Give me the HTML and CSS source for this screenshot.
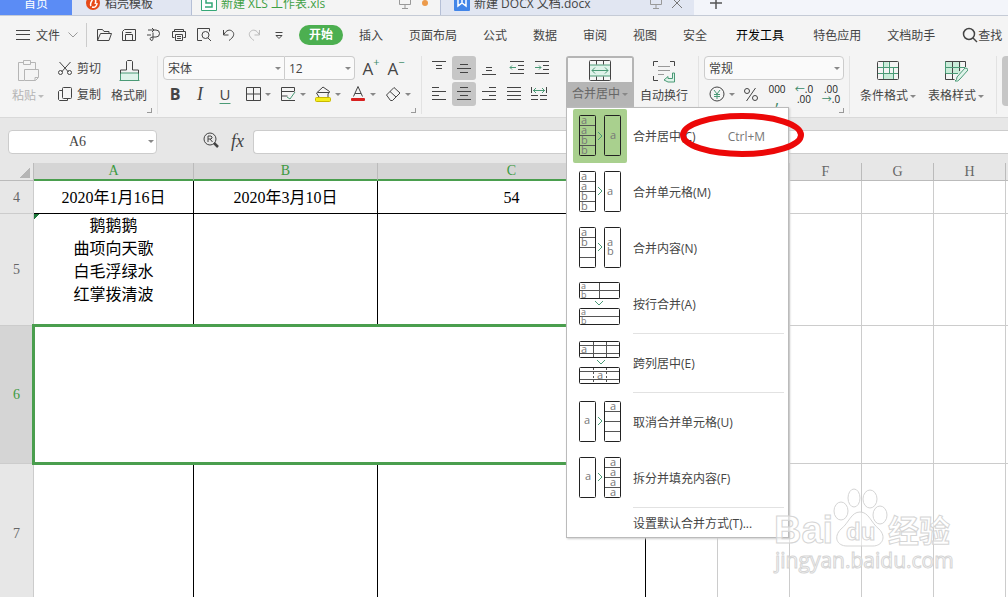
FILE: index.html
```
<!DOCTYPE html>
<html lang="zh-CN">
<head>
  <meta charset="UTF-8" />
  <meta name="viewport" content="width=device-width, initial-scale=1" />
  <title>新建 XLS 工作表.xls</title>
  <link rel="stylesheet" href="styles.css">
</head>
<body>

<div class="app">
  <nav class="tabs">
    <a class="tab home" href="#">首页</a>
    <a class="tab docer" href="#">
      <svg width="14" height="16" viewBox="0 0 14 16"><circle cx="7" cy="8" r="7" fill="#e64a19"/><path d="M5 11C3 8 7 6 7 2c3 2 3 5 2 7M6 12c3 1 5-1 5-4" fill="none" stroke="#fff" stroke-width="1.5"/></svg>
      稻壳模板
    </a>
    <a class="tab active" href="#">
      <svg width="16" height="16" viewBox="0 0 16 16"><path d="M.5.5h15v15H.5z" fill="#fff" stroke="#35a777"/><path d="M11 4H5v4h6v4H4" fill="none" stroke="#35a777" stroke-width="1.5"/></svg>
      <span class="tab-name">新建 XLS 工作表.xls</span>
      <svg width="12" height="14" viewBox="0 0 12 14"><path d="M.5 1.5h11v7H.5zM6 9v3M3 12.500h6" fill="none" stroke="#999"/></svg>
      <i class="dot"></i>
    </a>
    <a class="tab docx" href="#">
      <svg width="16" height="16" viewBox="0 0 16 16"><rect width="16" height="16" rx="1" fill="#4285e8"/><path d="M4 4v7l4-3 4 3V4M8 5v3" fill="none" stroke="#fff" stroke-width="1.5"/></svg>
      <span class="tab-name">新建 DOCX 文档.docx</span>
      <svg width="12" height="14" viewBox="0 0 12 14"><path d="M.5 1.500h11v7H.5zM6 9v3M3 12.500h6" fill="none" stroke="#999"/></svg>
      <svg width="10" height="14" viewBox="0 0 10 14"><path d="M0 2l10 10M10 2L0 12" stroke="#777"/></svg>
    </a>
    <button class="tab-add" aria-label="新建"><svg width="12" height="12" viewBox="0 0 12 12"><path d="M6 0v12M0 6h12" stroke="#555" stroke-width="1.5"/></svg></button>
  </nav>

  <header class="menubar">
    <button class="file-btn">
      <svg width="14" height="12" viewBox="0 0 14 12"><path d="M0 1.500h14M0 5.500h14M0 10.500h14" stroke="#444"/></svg>
      文件
      <svg class="file-arrow" width="10" height="6" viewBox="0 0 10 6"><path d="M.5.5L5 5 9.500.5" fill="none" stroke="#999"/></svg>
    </button>
    <div class="quick">
      <button aria-label="打开"><svg class="line" viewBox="0 0 16 16"><path d="M1.500 13.500v-11h5l1.500 2h5v2M1.500 13.500l3-7h11l-2.500 7z"/></svg></button>
      <button aria-label="保存"><svg class="line" viewBox="0 0 16 16"><path d="M1.500 13.500v-9l2-2h11v11zM4.500 13.500v-6h7v6M4.500 5.500h6"/></svg></button>
      <button aria-label="导出"><svg class="line" viewBox="0 0 16 16"><path d="M2 3h8a3.500 3.500 0 010 7H7M6 1L8 3 6 5M7 5.500v7a1.500 1.500 0 11-2-2L7 10M1 8h4"/></svg></button>
      <button aria-label="打印"><svg class="line" viewBox="0 0 16 16"><path d="M3.500 2.500h9v2h-9zM3.500 10.500h-2v-6h13v6h-2M4.500 7.500h7v6h-7zM6 9.500h4M6 11.500h4"/></svg></button>
      <button aria-label="打印预览"><svg class="line" viewBox="0 0 16 16"><path d="M6 13.500H1.500v-12h12v3"/><circle cx="9.500" cy="8" r="3.500"/><path d="M12 11l3 3"/></svg></button>
      <button aria-label="撤销"><svg class="line" viewBox="0 0 16 16"><path d="M2.500 3v5h5M3 7.500C5 3 9 2 11.500 4.500s1 6-3.500 9"/></svg></button>
      <button aria-label="恢复"><svg class="line pale" viewBox="0 0 16 16"><path d="M13.500 3v5h-5M13 7.500C11 3 7 2 4.500 4.500s-1 6 3.500 9"/></svg></button>
      <button aria-label="更多"><svg class="line" viewBox="0 0 16 16"><path d="M4.500 5.500h7M5 8.500h6l-3 3z"/></svg></button>
    </div>
    <nav class="menus">
      <a class="current" href="#">开始</a>
      <a href="#">插入</a>
      <a href="#">页面布局</a>
      <a href="#">公式</a>
      <a href="#">数据</a>
      <a href="#">审阅</a>
      <a href="#">视图</a>
      <a href="#">安全</a>
      <a class="dev" href="#">开发工具</a>
      <a href="#">特色应用</a>
      <a href="#">文档助手</a>
    </nav>
    <button class="find"><svg class="line" viewBox="0 0 16 16"><circle cx="7" cy="7" r="5.500" stroke-width="1.500"/><path d="M11 11l4 4" stroke-width="1.500"/></svg>查找</button>
  </header>

  <section class="ribbon">
    <!-- 剪贴板 -->
    <div class="group clipboard">
      <button class="big disabled">
        <svg class="line" width="24" height="24" viewBox="0 0 24 24"><path d="M7 3.500H2.500v18H8M15 3.500h4.500v7M7.500 1.500h7v4h-7zM8.500 10.500h14v8l-3 3h-11zM22 18.500h-3v3"/></svg>
        <span>粘贴<i class="caret"></i></span>
      </button>
      <div class="stack">
        <button class="small"><svg class="line" viewBox="0 0 16 16"><path d="M2.500 2l9 10M13.500 2l-9 10"/><circle cx="3.500" cy="12.500" r="2"/><circle cx="12.500" cy="12.500" r="2"/></svg>剪切</button>
        <button class="small"><svg class="line" viewBox="0 0 16 16"><rect x="5.500" y="1.500" width="9" height="11" rx="1"/><path d="M5 4.500H2.500l-1 1v8l1 1h8v-2"/></svg>复制</button>
      </div>
      <button class="big">
        <svg class="line" width="24" height="24" viewBox="0 0 24 24"><path d="M3.500 14v7.500h18V14z" fill="#dff3ea" stroke="#4a9a76"/><path d="M2.500 21.500h20" stroke="#4a9a76"/><path d="M3.500 14.500V11h6V2.500l1-1h4l1 1V11h6v3.500"/></svg>
        <span>格式刷</span>
      </button>
      <i class="corner"></i>
    </div>

    <!-- 字体 -->
    <div class="group font">
      <div class="row">
        <label class="combo family"><select aria-label="字体"><option>宋体</option></select><i class="caret"></i></label>
        <label class="combo size"><select aria-label="字号"><option>12</option></select><i class="caret"></i></label>
        <button class="tool letter" aria-label="增大字号">A<sup>+</sup></button>
        <button class="tool letter" aria-label="减小字号">A<sup>−</sup></button>
      </div>
      <div class="row">
        <button class="tool bold">B</button>
        <button class="tool italic">I</button>
        <button class="tool under">U</button>
        <button class="split" aria-label="边框"><svg class="line" viewBox="0 0 16 16"><path d="M1.500 1.500h14v13h-14zM8.500 1.500v13M1.500 8h14"/></svg><i class="caret"></i></button>
        <button class="split" aria-label="绘图边框"><svg class="line" viewBox="0 0 16 16"><path d="M14.500 5V1.500h-13v13h8M1.500 5.500h13M1.500 10h6M6 14.500h9"/><path d="M7 11l3 2 5-7" stroke="#4a9a76"/></svg><i class="caret"></i></button>
        <button class="split" aria-label="填充颜色"><svg class="line" viewBox="0 0 16 16"><path d="M4 11L1.500 7 8 1l6.500 4.500L13 8v3M2.500 6.500h12"/><rect x=".5" y="11.500" width="15" height="4" rx="1" fill="#f4ee1c" stroke="#c9b800"/></svg><i class="caret"></i></button>
        <button class="split" aria-label="字体颜色"><svg class="line" viewBox="0 0 16 16"><path d="M3.500 10.500L8 .5l4.500 10M5 7.500h6"/><rect x="1" y="12" width="14" height="3" rx="1" fill="#d8201f" stroke="none"/></svg><i class="caret"></i></button>
        <button class="split" aria-label="清除"><svg class="line" viewBox="0 0 16 16"><path d="M1.500 9L9 1.500 15 7l-7.500 7.500h-2zM5 5.500l6 5.500"/></svg><i class="caret"></i></button>
      </div>
      <i class="corner"></i>
    </div>

    <!-- 对齐方式 -->
    <div class="group align">
      <div class="stack">
        <div class="row">
          <button class="tool" aria-label="顶端对齐"><svg class="line" viewBox="0 0 16 16"><path d="M1 1.500h14M5 5.500h6M5 8.500h6"/></svg></button>
          <button class="tool on" aria-label="垂直居中"><svg class="line" viewBox="0 0 16 16"><path d="M4 4.500h8M1 8.500h14M4 12.500h8"/></svg></button>
          <button class="tool" aria-label="底端对齐"><svg class="line" viewBox="0 0 16 16"><path d="M5 7.500h6M5 10.500h6M1 14.500h14"/></svg></button>
          <button class="tool indent" aria-label="减少缩进"><svg class="line" viewBox="0 0 16 16"><path d="M1 1.500h14M9 5.500h6M9 9.500h6M1 13.500h14"/><path d="M7 7.500H1M3 5.500l-2 2 2 2" stroke="#4a9a76"/></svg></button>
          <button class="tool" aria-label="增加缩进"><svg class="line" viewBox="0 0 16 16"><path d="M1 1.500h14M9 5.500h6M9 9.500h6M1 13.500h14"/><path d="M1 7.500h6M5 5.500l2 2-2 2" stroke="#4a9a76"/></svg></button>
        </div>
        <div class="row">
          <button class="tool" aria-label="左对齐"><svg class="line" viewBox="0 0 16 16"><path d="M1 1.500h7M1 5.500h14M1 9.500h7M1 13.500h14"/></svg></button>
          <button class="tool on" aria-label="水平居中"><svg class="line" viewBox="0 0 16 16"><path d="M4 1.500h8M1 5.500h14M4 9.500h8M1 13.500h14"/></svg></button>
          <button class="tool" aria-label="右对齐"><svg class="line" viewBox="0 0 16 16"><path d="M8 1.500h7M1 5.500h14M8 9.500h7M1 13.500h14"/></svg></button>
          <button class="tool" aria-label="两端对齐"><svg class="line" viewBox="0 0 16 16"><path d="M1 1.500h14M1 5.500h14M1 9.500h14M1 13.500h14"/></svg></button>
          <button class="tool" aria-label="分散对齐"><svg class="line" viewBox="0 0 16 16"><path d="M.5 1v6M15.500 1v6M0 9.500h7M9 9.500h7M0 13.500h7M9 13.500h7"/><path d="M2 4.500h12M5 2L2.500 4.500 5 7M11 2l2.500 2.500L11 7" stroke="#4a9a76"/></svg></button>
        </div>
      </div>
      <div class="merge">
        <button class="merge-btn">
          <span class="merge-icon"><svg class="line" width="24" height="24" viewBox="0 0 24 24"><path d="M1.500 7h21v11h-21z" fill="#dff3ea" stroke="#4a9a76"/><rect x="1.500" y="2.500" width="21" height="20" rx="1"/><path d="M8.500 2.500v4M15.500 2.500v4M8.500 18.500v4M15.500 18.500v4"/><path d="M4 12.500h16M7 9.500l-3 3 3 3M17 9.500l3 3-3 3" stroke="#4a9a76"/></svg></span>
          <span class="merge-text">合并居中<i class="caret"></i></span>
        </button>
        <div class="dropdown">
          <button class="item selected">
            <svg class="pic" viewBox="0 0 54 54"><rect x="6.500" y="6.500" width="16" height="40" rx="1"/><rect x="31.500" y="6.500" width="16" height="40" rx="1"/><path d="M7 16.500h15M7 26.500h15M7 36.500h15"/><path class="arrow" d="M25 23l4 4-4 4"/><text x="8" y="15">a</text><text x="8" y="25">a</text><text x="8" y="35">b</text><text x="8" y="45">b</text><text x="37" y="30">a</text></svg>
            合并居中(C)<span class="key">Ctrl+M</span>
            <svg class="mark" width="126" height="46" viewBox="0 0 126 46"><ellipse cx="63" cy="23" rx="59" ry="19" fill="none" stroke="#ec0808" stroke-width="6"/></svg>
          </button>
          <button class="item">
            <svg class="pic" viewBox="0 0 54 54"><rect x="6.500" y="6.500" width="16" height="40" rx="1"/><rect x="31.500" y="6.500" width="16" height="40" rx="1"/><path d="M7 16.500h15M7 26.500h15M7 36.500h15"/><path class="arrow" d="M25 22l4 4-4 4"/><text x="8" y="15">a</text><text x="8" y="25">a</text><text x="8" y="35">b</text><text x="8" y="45">b</text><text x="34" y="30">a</text></svg>
            合并单元格(M)
          </button>
          <button class="item">
            <svg class="pic" viewBox="0 0 54 54"><rect x="6.500" y="6.500" width="16" height="40" rx="1"/><rect x="31.500" y="6.500" width="16" height="40" rx="1"/><path d="M7 16.500h15M7 26.500h15M7 36.500h15"/><path class="arrow" d="M25 22l4 4-4 4"/><text x="8" y="15">a</text><text x="8" y="25">b</text><text x="34" y="25">a</text><text x="34" y="34">b</text></svg>
            合并内容(N)
          </button>
          <button class="item">
            <svg class="pic tight" viewBox="0 0 54 54"><rect x="6.500" y="5.500" width="40" height="16" rx="1"/><rect x="6.500" y="31.500" width="40" height="16" rx="1"/><path d="M7 13.500h39M26.500 6v15M7 39.500h39"/><path class="arrow" d="M22 24l4 4 4-4"/><text x="8" y="12">a</text><text x="8" y="21">b</text><text x="8" y="38">a</text><text x="8" y="47">b</text></svg>
            按行合并(A)
          </button>
          <hr>
          <button class="item">
            <svg class="pic" viewBox="0 0 54 54"><rect x="6.500" y="5.500" width="40" height="16" rx="1"/><rect x="6.500" y="31.500" width="40" height="16" rx="1"/><path d="M7 9.500h39M7 17.500h39M20.500 6v15M33.500 6v15M7 35.500h39M7 43.500h39"/><path d="M20.500 32v15M33.500 32v15" stroke-dasharray="2 2"/><path class="arrow" d="M24 24l4 4 4-4"/><text x="8" y="17">a</text><text x="24" y="43">a</text></svg>
            跨列居中(E)
          </button>
          <hr>
          <button class="item">
            <svg class="pic" viewBox="0 0 54 54"><rect x="6.500" y="6.500" width="16" height="40" rx="1"/><rect x="31.500" y="6.500" width="16" height="40" rx="1"/><path d="M32 16.500h15M32 26.500h15M32 36.500h15"/><path class="arrow" d="M25 22l4 4-4 4"/><text x="11" y="29">a</text><text x="37" y="15">a</text></svg>
            取消合并单元格(U)
          </button>
          <button class="item">
            <svg class="pic" viewBox="0 0 54 54"><rect x="6.500" y="6.500" width="16" height="40" rx="1"/><rect x="31.500" y="6.500" width="16" height="40" rx="1"/><path d="M32 16.500h15M32 26.500h15M32 36.500h15"/><path class="arrow" d="M25 22l4 4-4 4"/><text x="12" y="29">a</text><text x="37" y="15">a</text><text x="37" y="25">a</text><text x="37" y="35">a</text><text x="37" y="45">a</text></svg>
            拆分并填充内容(F)
          </button>
          <hr>
          <button class="item plain">设置默认合并方式(T)...</button>
        </div>
      </div>
      <button class="big">
        <svg class="line" width="24" height="24" viewBox="0 0 24 24"><path d="M1.500 7V2.500H6M18 2.500h4.500V7M1.500 17v4.500H6"/><path d="M6 7.500h12M6 11.500h12M6 15.500h6" stroke="#999"/><path d="M20.500 14v5.500H16v-2l-4 3.500 4 2h6.500V14z" fill="#dff3ea" stroke="#4a9a76"/></svg>
        <span>自动换行</span>
      </button>
    </div>

    <!-- 数字 -->
    <div class="group number">
      <div class="row">
        <label class="combo format"><select aria-label="数字格式"><option>常规</option></select><i class="caret"></i></label>
      </div>
      <div class="row">
        <button class="split" aria-label="货币"><svg class="line" viewBox="0 0 16 16"><circle cx="8" cy="8" r="7"/><path d="M5 4l3 4 3-4M8 8v5M5 8.500h6M5 10.500h6" stroke="#4a9a76"/></svg><i class="caret"></i></button>
        <button class="tool" aria-label="百分比"><svg class="line" viewBox="0 0 16 16"><circle cx="4" cy="5" r="2.500"/><circle cx="12" cy="12" r="2.500"/><path d="M12.500 2l-9 13"/></svg></button>
        <button class="tool digits">000<b class="comma">,</b></button>
        <button class="tool digits"><span><b>←</b>.0</span>.00</button>
        <button class="tool digits">.00<span><b>→</b>.0</span></button>
      </div>
      <i class="corner"></i>
    </div>

    <!-- 样式 -->
    <div class="group styles">
      <button class="big">
        <svg class="line" width="24" height="24" viewBox="0 0 24 24"><path d="M7.500 3h5v6h-5zM7.500 15h10v6h-10z" fill="#c9ecd9" stroke="none"/><path d="M7.500 3v18M13.500 3v12M17.500 9v12M2 8.500h20M2 14.500h20" stroke="#4a9a76"/><rect x="1.500" y="2.500" width="21" height="18" rx="1"/></svg>
        <span>条件格式<i class="caret"></i></span>
      </button>
      <button class="big">
        <svg class="line" width="24" height="24" viewBox="0 0 24 24"><path d="M1.500 2.500h15v12h-15z" fill="#c9ecd9" stroke="none"/><path d="M21.500 8V2.500h-20v18h9M8.500 3v17M15.500 3v9"/><path d="M2 8.500h19M2 14.500h12M1.500 2.500v12" stroke="#4a9a76"/><path d="M24 11l-8 9q-2 3-5 2 2-1 2-4l8-9q3 0 3 2z" fill="#dff3ea" stroke="#4a9a76"/></svg>
        <span>表格样式<i class="caret"></i></span>
      </button>
    </div>
    <div class="group more"><button aria-label="更多"></button></div>
  </section>

  <section class="formula">
    <label class="namebox"><input type="text" value="A6" aria-label="名称框"><i class="caret"></i></label>
    <button aria-label="浏览公式"><svg class="line" viewBox="0 0 16 16"><circle cx="7" cy="7" r="6"/><path d="M5 10V4h3l1 1v1L8 7H5M7 7l2.500 3"/><path d="M11 11l4 4" stroke-width="2.500"/></svg></button>
    <button class="fx">fx</button>
    <input class="formula-input" type="text" aria-label="编辑栏">
  </section>

  <main class="sheet">
    <table>
      <colgroup><col class="c-head"><col class="c-a"><col class="c-b"><col class="c-c"><col><col><col><col><col><col></colgroup>
      <thead>
        <tr>
          <th class="all"></th>
          <th class="sel">A</th><th class="sel">B</th><th class="sel">C</th>
          <th>D</th><th>E</th><th>F</th><th>G</th><th>H</th><th></th>
        </tr>
      </thead>
      <tbody>
        <tr class="r4">
          <th>4</th>
          <td class="box">2020年1月16日</td><td class="box">2020年3月10日</td><td class="box">54</td>
          <td></td><td></td><td></td><td></td><td></td><td></td>
        </tr>
        <tr class="r5">
          <th>5</th>
          <td class="box flag">鹅鹅鹅<br>曲项向天歌<br>白毛浮绿水<br>红掌拨清波</td><td class="box"></td><td class="box"></td>
          <td></td><td></td><td></td><td></td><td></td><td></td>
        </tr>
        <tr class="r6">
          <th class="sel">6</th>
          <td class="box active-cell" colspan="3"></td>
          <td></td><td></td><td></td><td></td><td></td><td></td>
        </tr>
        <tr class="r7">
          <th>7</th>
          <td class="box"></td><td class="box"></td><td class="box"></td>
          <td></td><td></td><td></td><td></td><td></td><td></td>
        </tr>
      </tbody>
    </table>
  </main>

  <svg class="watermark" width="190" height="94" viewBox="0 0 190 94">
    <text class="brand" x="4" y="56">Bai</text>
    <path d="M90 25c9 0 11 11 19 17 8 8 3 17-6 17H77c-10 0-14-9-6-17 8-6 10-17 19-17z"/>
    <ellipse cx="71" cy="24" rx="7" ry="9"/><ellipse cx="84" cy="11" rx="6" ry="9"/><ellipse cx="100" cy="12" rx="7" ry="9"/><ellipse cx="110" cy="28" rx="7" ry="9"/>
    <text class="du" x="76" y="53">du</text>
    <text class="cn" x="118" y="55">经验</text>
    <text class="site" x="5" y="81">jingyan.baidu.com</text>
  </svg>
</div>

</body>
</html>
```
FILE: styles.css
```
* {
  box-sizing: border-box;
}
body {
  margin: 0;
  font-family: "Open Sans", "Noto Sans CJK SC", sans-serif;
  font-size: 12px;
  color: #444;
}
a {
  color: inherit;
  text-decoration: none;
}
button, input, select {
  font: inherit;
  color: inherit;
  background: none;
  border: none;
  margin: 0;
  padding: 0;
}
svg {
  flex: none;
}
.app {
  position: relative;
  display: flex;
  flex-direction: column;
  height: 100vh;
  overflow: hidden;
  background: #fff;
}
.line {
  width: 16px;
  height: 16px;
  fill: none;
  stroke: #444;
  stroke-width: 1;
}
.line.pale {
  stroke: #bbb;
}
.caret {
  flex: none;
  width: 0;
  border: 3px solid transparent;
  border-top-color: #888;
  border-bottom: 0;
}

/* tabs */
.tabs {
  flex: none;
  display: flex;
  align-items: flex-end;
  height: 16px;
  overflow: hidden;
  background: #f3f5fa;
  border-bottom: 1px solid #c5cbd6;
}
.tab {
  flex: none;
  display: flex;
  align-items: center;
  gap: 5px;
  height: 24px;
  padding: 0 12px;
  background: #e1e6f2;
}
.tab.home {
  width: 72px;
  justify-content: center;
  background: #5b8cf5;
  color: #fff;
}
.tab.docer {
  width: 120px;
  padding-left: 14px;
  border-right: 1px solid #b5bfd6;
}
.tab.active {
  width: 248px;
  height: 25px;
  padding: 0 12px 1px 9px;
  margin-bottom: -1px;
  background: #f4f4f4;
  color: #3fa045;
}
.tab.docx {
  width: 254px;
  padding-left: 13px;
  border-left: 1px solid #b5bfd6;
}
.tab.active, .tab.docx {
  gap: 4px;
}
.tab.docx > svg:last-child {
  margin-left: 6px;
}
.tab-name {
  flex: 1;
}
.dot {
  width: 6px;
  height: 6px;
  margin-left: 7px;
  border-radius: 50%;
  background: #ec9a4a;
}
.tab-add {
  display: flex;
  align-items: center;
  height: 24px;
  padding: 0 16px;
}

/* menu bar */
.menubar {
  flex: none;
  display: flex;
  align-items: center;
  height: 38px;
  padding-left: 16px;
  background: #f4f4f4;
  white-space: nowrap;
}
.file-btn {
  display: flex;
  align-items: center;
  gap: 6px;
  width: 71px;
  height: 24px;
  border-right: 1px solid #ccc;
}
.file-arrow {
  margin-left: 2px;
}
.quick {
  display: flex;
  margin-left: 4px;
}
.quick button {
  display: flex;
  justify-content: center;
  width: 25px;
}
.menus {
  display: flex;
  align-items: center;
  gap: 26px;
  margin-left: 8px;
}
.menus .current {
  width: 44px;
  margin-right: -10px;
  line-height: 20px;
  text-align: center;
  border-radius: 10px;
  background: #4caf50;
  color: #fff;
  font-weight: bold;
}
.menus .dev {
  margin: 0 3px;
  color: #000;
}
.find {
  display: flex;
  align-items: center;
  margin-left: 27px;
}

/* ribbon */
.ribbon {
  flex: none;
  display: flex;
  height: 64px;
  background: #f4f4f4;
  border-bottom: 1px solid #d9d9d9;
  white-space: nowrap;
}
.group {
  flex: none;
  position: relative;
  padding-top: 2px;
}
.group::after {
  content: "";
  position: absolute;
  top: 2px;
  right: 0;
  width: 1px;
  height: 58px;
  background: #e2e2e2;
}
.corner {
  position: absolute;
  right: 6px;
  bottom: 4px;
  width: 5px;
  height: 5px;
  border: solid #999;
  border-width: 0 1px 1px 0;
}
.row {
  display: flex;
  align-items: center;
  height: 24px;
  margin-bottom: 2px;
}
.tool {
  display: flex;
  align-items: center;
  justify-content: center;
  width: 24px;
  height: 24px;
  margin-right: 1px;
  border-radius: 3px;
}
.tool.on {
  background: #c6c6c6;
}
.split {
  display: flex;
  align-items: center;
  gap: 4px;
  width: 35px;
  height: 24px;
  padding-left: 7px;
}
.big {
  display: flex;
  flex-direction: column;
  align-items: center;
  height: 50px;
  padding-top: 3px;
}
.big .line {
  width: 24px;
  height: 24px;
}
.big span {
  display: flex;
  align-items: center;
  gap: 2px;
  line-height: 26px;
}
.disabled {
  color: #b5b5b5;
}
.disabled .line {
  stroke: #b5b5b5;
}
.disabled .caret {
  border-top-color: #bbb;
}

.clipboard {
  display: flex;
  width: 158px;
  padding-left: 12px;
}
.small {
  display: flex;
  align-items: center;
  gap: 4px;
  height: 24px;
  margin: 0 0 2px 13px;
}
.clipboard .stack + .big {
  margin-left: 10px;
}

.combo {
  position: relative;
  display: flex;
  height: 24px;
  background: #fafafa;
  border: 1px solid #ccc;
  border-radius: 4px;
}
.combo select {
  appearance: none;
  width: 100%;
  padding: 0 4px;
}
.combo .caret, .namebox .caret {
  position: absolute;
  top: 10px;
  right: 3px;
}
.family {
  width: 122px;
  border-radius: 4px 0 0 4px;
}
.size {
  width: 70px;
  margin-right: 4px;
  border-left: 0;
  border-radius: 0 4px 4px 0;
}
.format {
  width: 140px;
}

.font {
  width: 264px;
  padding-left: 5px;
}
.letter {
  font-size: 17px;
}
.letter sup {
  align-self: flex-start;
  font-size: 11px;
  line-height: 12px;
  color: #3b8a68;
}
.bold {
  font-size: 16px;
  font-weight: bold;
}
.italic {
  font-family: "Liberation Serif", serif;
  font-size: 18px;
  font-style: italic;
}
.under {
  font-size: 15px;
  text-decoration: underline;
  text-decoration-color: #4a9a76;
  text-underline-offset: 3px;
}

.align {
  display: flex;
  width: 277px;
  padding-left: 5px;
}
.indent {
  margin-left: 3px;
}
.merge {
  position: relative;
  margin: 0 6px 0 10px;
}
.align .stack {
  width: 129px;
}
.merge-btn {
  display: flex;
  flex-direction: column;
  width: 68px;
  height: 51px;
  border: 2px solid #b5b5b5;
  border-radius: 3px 3px 0 0;
  background: #b5b5b5;
}
.merge-icon {
  display: flex;
  align-items: center;
  justify-content: center;
  width: 100%;
  height: 26px;
  background: #f7f7f7;
}
.merge-icon .line {
  width: 24px;
  height: 24px;
}
.merge-text {
  display: flex;
  align-items: center;
  justify-content: center;
  gap: 2px;
  width: 100%;
  line-height: 24px;
  color: #666;
}
.dropdown {
  position: absolute;
  z-index: 2;
  top: 51px;
  left: 0;
  width: 223px;
  background: #fff;
  border: 1px solid #bbb;
  box-shadow: 1px 1px 2px #ccc;
}
.item {
  position: relative;
  display: flex;
  align-items: center;
  gap: 6px;
  width: 100%;
  height: 56px;
  padding-left: 6px;
}
.item.plain {
  height: 28px;
  padding-left: 66px;
}
.key {
  margin-left: 26px;
  color: #777;
}
.mark {
  position: absolute;
  top: 4px;
  left: 112px;
}
.dropdown hr {
  height: 1px;
  margin: 1px 4px 1px 66px;
  border: 0;
  background: #e2e2e2;
}
.pic {
  width: 54px;
  height: 54px;
  fill: none;
  stroke: #555;
}
.pic rect {
  stroke: #222;
}
.pic .arrow {
  stroke: #4a9a76;
}
.pic text {
  fill: #777;
  stroke: none;
  font-size: 11px;
}
.pic.tight text {
  font-size: 9px;
}
.selected .pic {
  background: #a9d08e;
  border-radius: 2px;
}

.number {
  width: 151px;
  padding-left: 5px;
}
.number .split {
  padding-left: 5px;
}
.digits {
  flex-direction: column;
  width: 26px;
  font-size: 10px;
  line-height: 10px;
  color: #222;
}
.digits b {
  font-weight: normal;
  color: #3b8a68;
}
.digits .comma {
  font-size: 16px;
}

.styles {
  display: flex;
  gap: 12px;
  width: 147px;
  padding-left: 10px;
}
.more {
  padding-left: 5px;
}
.more button {
  width: 24px;
  height: 50px;
  border-radius: 4px;
  background: #c6c6c6;
}

/* formula bar */
.formula {
  flex: none;
  display: flex;
  align-items: center;
  height: 45px;
  padding: 2px 0 0 8px;
  background: #e7e7e7;
}
.namebox {
  position: relative;
  width: 149px;
  margin-right: 46px;
}
.namebox input, .formula-input {
  height: 24px;
  background: #fff;
  border: 1px solid #ccc;
  border-radius: 4px;
}
.namebox input {
  display: block;
  width: 100%;
  padding-right: 10px;
  text-align: center;
  font-family: "Liberation Serif", serif;
  font-size: 14px;
}
.fx {
  margin: 0 9px 0 12px;
  font-family: "Liberation Serif", serif;
  font-size: 18px;
  font-style: italic;
}
.formula-input {
  flex: 1;
  border-right: 0;
  border-radius: 4px 0 0 4px;
}

/* sheet */
.sheet {
  flex: 1;
  overflow: hidden;
}
table {
  width: 1078px;
  table-layout: fixed;
  border-spacing: 0;
  font-family: "Liberation Serif", "Noto Sans CJK SC", serif;
  font-size: 16px;
  line-height: 23px;
  color: #000;
}
.c-head {
  width: 34px;
}
.c-a {
  width: 160px;
}
.c-b {
  width: 184px;
}
.c-c {
  width: 268px;
}
th, td {
  padding: 0;
  border: solid #ccc;
  border-width: 0 1px 1px 0;
  text-align: center;
}
th {
  background: #e7e7e7;
  font-size: 14px;
  font-weight: normal;
  color: #666;
}
thead th {
  height: 18px;
  line-height: 16px;
  border-color: #bbb;
}
th.sel {
  background: #d5d5d5;
  color: #3c9a41;
}
thead th.sel {
  border-bottom: 2px solid #4a9e4e;
}
.all {
  background: linear-gradient(135deg, transparent 50%, #b5b5b5 50%) 20px 5px / 10px 10px no-repeat, #e7e7e7;
}
.box {
  border-color: #000;
}
.r4 {
  height: 33px;
}
.r5 {
  height: 112px;
}
.r6 {
  height: 138px;
}
.r7 {
  height: 140px;
}
.r5 td {
  vertical-align: top;
}
.flag {
  background: linear-gradient(135deg, #1e7a3c 50%, transparent 50%) 0 0 / 5px 5px no-repeat;
}
.active-cell {
  position: relative;
}
.active-cell::after {
  content: "";
  position: absolute;
  inset: -2px;
  border: 3px solid #4a9e4e;
}

.watermark {
  position: absolute;
  right: 48px;
  bottom: 16px;
  z-index: 3;
  fill: #fff;
  fill-opacity: 0.5;
  stroke: #d5d5d5;
  stroke-width: 1;
}
.brand {
  font: bold 38px "Liberation Sans", sans-serif;
}
.du {
  font: bold 24px "Liberation Sans", sans-serif;
}
.cn {
  font: bold 31px "Noto Sans CJK SC", sans-serif;
}
.site {
  font: 21px "Open Sans", sans-serif;
}
```
